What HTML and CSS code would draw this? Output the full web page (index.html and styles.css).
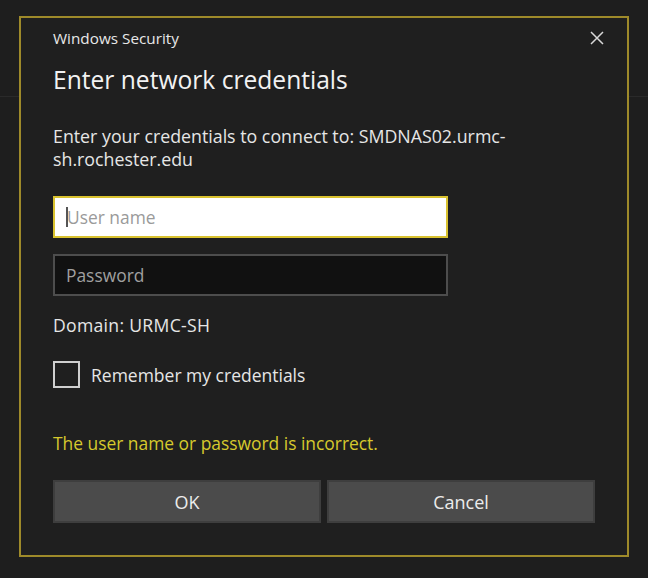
FILE: index.html
```html
<!DOCTYPE html>
<html>
<head>
<meta charset="utf-8">
<link rel="stylesheet" href="styles.css">
</head>
<body>
<div class="backdrop-line"></div>
<div class="dialog">
  <div class="titlebar">
    <span class="app-name">Windows Security</span>
    <span class="close" aria-label="Close">
      <svg width="14" height="14" viewBox="0 0 14 14"><path d="M1 1 L13 13 M13 1 L1 13" stroke="#d8d8d8" stroke-width="1.5" fill="none"/></svg>
    </span>
  </div>
  <h1 class="heading">Enter network credentials</h1>
  <p class="desc">Enter your credentials to connect to: SMDNAS02.urmc-<br>sh.rochester.edu</p>
  <div class="field field-focus"><span class="caret"></span><span class="ph ph-light">User name</span></div>
  <div class="field field-dark"><span class="ph ph-dark">Password</span></div>
  <div class="domain">Domain: URMC-SH</div>
  <label class="check-row"><span class="checkbox"></span><span class="check-label">Remember my credentials</span></label>
  <div class="error">The user name or password is incorrect.</div>
  <div class="buttons">
    <button class="btn">OK</button>
    <button class="btn">Cancel</button>
  </div>
</div>
</body>
</html>
```
FILE: styles.css
```css
html, body {
  margin: 0;
  padding: 0;
}
body {
  width: 648px;
  height: 578px;
  background: #1e1e1e;
  font-family: "Open Sans", "Noto Sans", sans-serif;
  color: #e6e6e6;
  padding: 16px 0 0 19px;
  box-sizing: border-box;
  position: relative;
  overflow: hidden;
}
.backdrop-line {
  position: absolute;
  left: 0;
  right: 0;
  top: 96px;
  height: 1px;
  background: #2a2a2a;
}
.dialog {
  position: relative;
  width: 610px;
  height: 541px;
  box-sizing: border-box;
  border: 2px solid #9e8a2a;
  background: #1f1f1f;
  padding: 0 32px 0 32px;
  display: flex;
  flex-direction: column;
}
.titlebar {
  display: flex;
  justify-content: space-between;
  align-items: center;
  height: 22px;
  margin-top: 9px;
  margin-right: -9px;
}
.app-name {
  font-size: 15.3px;
  color: #e8e8e8;
}
.close {
  display: flex;
  width: 14px;
  height: 14px;
}
.heading {
  margin: 16px 0 0 0;
  font-size: 24.6px;
  font-weight: 400;
  line-height: 30px;
  color: #f2f2f2;
}
.desc {
  margin: 30px 0 0 0;
  font-size: 17.8px;
  line-height: 23px;
  color: #e6e6e6;
}
.field {
  width: 395px;
  height: 42px;
  box-sizing: border-box;
  display: flex;
  align-items: center;
  padding-left: 11px;
  font-size: 17.4px;
}
.field-focus {
  margin-top: 25px;
  background: #ffffff;
  border: 2px solid #d9c22f;
}
.field-dark {
  margin-top: 16px;
  background: #111111;
  border: 2px solid #4d4d4d;
}
.caret {
  width: 2px;
  height: 20px;
  background: #555;
  margin-right: -1px;
}
.ph-light { color: #9a9a9a; }
.ph-dark { color: #a0a0a0; }
.domain {
  margin-top: 18px;
  font-size: 17.6px;
  line-height: 22px;
  letter-spacing: 0.3px;
}
.check-row {
  display: flex;
  align-items: center;
  margin-top: 25px;
  height: 27px;
}
.checkbox {
  width: 27px;
  height: 27px;
  box-sizing: border-box;
  border: 2px solid #cfcfcf;
  background: #1f1f1f;
}
.check-label {
  margin-left: 11px;
  font-size: 17.5px;
}
.error {
  margin-top: 44px;
  font-size: 17.4px;
  line-height: 22px;
  color: #d6c92d;
}
.buttons {
  display: grid;
  grid-template-columns: 1fr 1fr;
  gap: 6px;
  margin-top: 26px;
}
.btn {
  height: 43px;
  background: #4b4b4b;
  border: 2px solid #3e3e3e;
  color: #ececec;
  font-family: "Open Sans", "Noto Sans", sans-serif;
  font-size: 18px;
  padding: 0;
}
```
